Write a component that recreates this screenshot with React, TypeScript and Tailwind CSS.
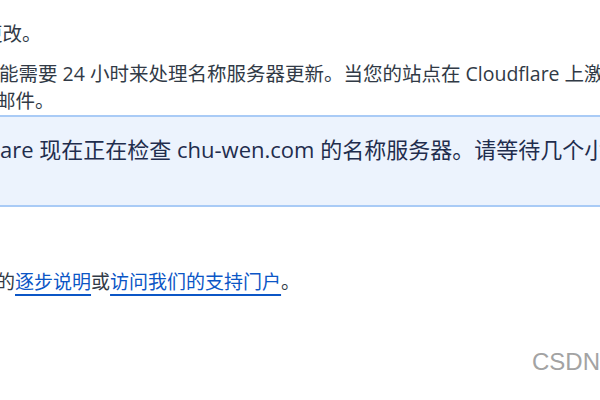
export default function App() {
  return (
    <div
      className="relative h-[400px] w-[600px] overflow-hidden bg-white text-[19.5px] leading-[27px] text-[#313a46]"
      style={{ fontFamily: '"Open Sans", "Noto Sans CJK SC", sans-serif' }}
    >
      <div className="whitespace-nowrap pt-[20px]">
        {/* intro paragraphs, cut off on the left */}
        <p className="-ml-[17px]">更改。</p>
        <p className="mt-[13px] -ml-[1px]">
          能需要 24 小时来处理名称服务器更新。当您的站点在 Cloudflare 上激活时，您将收到电子
        </p>
        <p className="-ml-[4px]">邮件。</p>

        {/* info box */}
        <div className="mt-[1px] border-y-2 border-[#a9cbf6] bg-[#ecf3fd] pb-[42px] pt-[18px] text-[22px] leading-[28px] text-[#1f2d4d]">
          <p>are 现在正在检查 chu-wen.com 的名称服务器。请等待几个小时。</p>
        </div>

        <p className="mt-[62px] -ml-[4px] text-[19px]">
          的
          <a href="#" className="text-[#0b56c6] underline decoration-[1.5px] underline-offset-[5px]">
            逐步说明
          </a>
          或
          <a href="#" className="text-[#0b56c6] underline decoration-[1.5px] underline-offset-[5px]">
            访问我们的支持门户
          </a>
          。
        </p>
      </div>

      {/* watermark */}
      <span
        className="absolute left-[532px] top-[348px] whitespace-nowrap text-[24px] leading-[28px] text-[#a3a3a3]"
        style={{ fontFamily: '"Liberation Sans", Arial, sans-serif' }}
      >
        CSDN @chu-wen
      </span>
    </div>
  );
}
